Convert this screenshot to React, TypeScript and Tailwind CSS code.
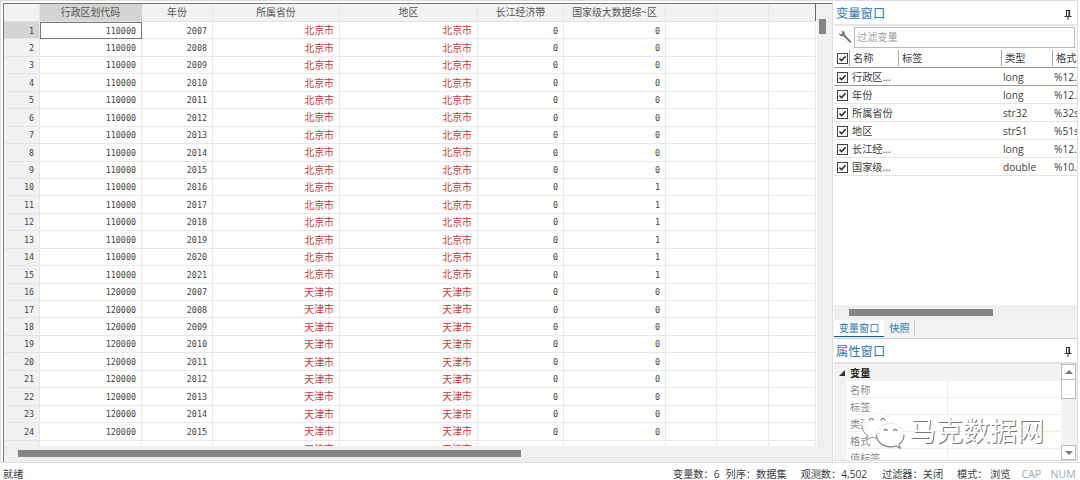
import React from 'react';

interface Column {
  name: string;
  width: string;
  active?: boolean;
}

interface Variable {
  name: string;
  type: string;
  format: string;
}

const columns: Column[] = [
  { name: '行政区划代码', width: 'w-[102px]', active: true },
  { name: '年份', width: 'w-[71px]' },
  { name: '所属省份', width: 'w-[127px]' },
  { name: '地区', width: 'w-[138px]' },
  { name: '长江经济带', width: 'w-[86px]' },
  { name: '国家级大数据综~区', width: 'w-[102px]' },
  { name: '', width: 'w-[51px]' },
  { name: '', width: 'w-[52px]' },
  { name: '', width: 'w-[47px]' },
];

// 15 years for Beijing first, then Tianjin
const rows = Array.from({ length: 24 }, (_, i) => {
  const year = 2007 + (i % 15);
  const beijing = i < 15;
  const city = beijing ? '北京市' : '天津市';
  return [
    beijing ? '110000' : '120000',
    String(year),
    city,
    city,
    '0',
    year >= 2016 ? '1' : '0',
    '',
    '',
    '',
  ];
});

// only the tops of the city names show in the last row
rows.push(['', '', '天津市', '天津市', '', '', '', '', '']);

const variables: Variable[] = [
  { name: '行政区...', type: 'long', format: '%12.' },
  { name: '年份', type: 'long', format: '%12.' },
  { name: '所属省份', type: 'str32', format: '%32s' },
  { name: '地区', type: 'str51', format: '%51s' },
  { name: '长江经...', type: 'long', format: '%12.' },
  { name: '国家级...', type: 'double', format: '%10.' },
];

const properties = ['名称', '标签', '类型', '格式', '值标签'];

const Checkbox: React.FC = () => (
  <svg viewBox="0 0 11 11" className="mt-px h-[11px] w-[11px] flex-shrink-0">
    <rect x="0.5" y="0.5" width="10" height="10" fill="#fff" stroke="#444" />
    <path d="M2.5 5.5 L4.5 7.7 L8.6 3.2" fill="none" stroke="#222" strokeWidth="1.5" />
  </svg>
);

const Pin: React.FC = () => (
  <svg viewBox="0 0 8 12" className="mr-[5px] h-3 w-2">
    <path d="M2 1.5 H6 M2.5 1 V7 M0.5 7.5 H7.5 M4 8 V11" fill="none" stroke="#333" />
    <path d="M5.25 1 V7" stroke="#333" strokeWidth="1.7" />
  </svg>
);

const Wrench: React.FC = () => (
  <svg viewBox="0 0 14 14" className="h-3.5 w-3.5">
    <path
      d="M1 3.2 L3.1 4.2 L4.3 3.2 L3.6 1.1 C5.8 0.9 7.2 2.5 6.7 4.5 L13 11.2 C13.5 12.2 12.6 13.1 11.6 12.5 L5.2 6 C3.1 6.6 1 5.4 1 3.2 Z"
      fill="#747474"
    />
  </svg>
);

const DataGrid: React.FC = () => (
  <div className="flex h-[459px] w-[829px] flex-col border-l border-t border-[#777] bg-[#efefef]">
    <div className="flex h-[442px]">
      <div className="flex w-[813px] flex-col overflow-hidden bg-white">
        <div className="flex h-[18px] flex-shrink-0 border-b border-[#e2e2e2] bg-[#f2f2f2]">
          <div className="w-9 flex-shrink-0 border-r border-[#e6e6e6]" />
          {columns.map((column, i) => (
            <div
              key={i}
              className={`flex flex-shrink-0 items-center justify-center whitespace-nowrap border-r pt-px text-[9.9px] leading-none text-[#555] last:border-[#666] ${column.width} ${column.active ? 'border-[#d4d4d4] bg-[#d4d4d4]' : 'border-[#e6e6e6]'}`}
            >
              {column.name}
            </div>
          ))}
        </div>
        {rows.map((row, i) => (
          <div key={i} className="flex h-[17.45px] flex-shrink-0 font-['DejaVu_Sans_Mono','Noto_Sans_CJK_SC',monospace] text-[8.4px] leading-none text-[#444]">
            <div
              className={`flex w-9 flex-shrink-0 items-center justify-end border-b border-r border-[#e6e6e6] pr-[5px] pt-px ${i === 0 ? 'bg-[#d4d4d4]' : 'bg-[#f2f2f2]'}`}
            >
              {i < 24 && i + 1}
            </div>
            {row.map((value, j) => (
              <div
                key={j}
                className={`flex flex-shrink-0 items-center justify-end pr-[5px] ${columns[j].width} ${j === 2 || j === 3 ? "pt-0.5 font-['Noto_Sans_CJK_SC',sans-serif] text-[9.9px] text-[#bd3c3c]" : 'pt-px'} ${i === 0 && j === 0 ? 'border border-[#777]' : 'border-b border-r border-[#e9e9e9]'}`}
              >
                {value}
              </div>
            ))}
          </div>
        ))}
      </div>
      <div className="flex flex-1 pl-0.5 pt-[15px]">
        <div className="h-[15px] w-[7px] bg-[#858585]" />
      </div>
    </div>
    <div className="flex flex-1 pl-[14px] pt-1">
      <div className="h-[7px] w-[503px] bg-[#858585]" />
    </div>
  </div>
);

const VariablesPanel: React.FC = () => (
  <div className="flex h-[336px] flex-col">
    <div className="flex h-[23px] flex-shrink-0 items-center justify-between border-b-2 border-[#e6e6e6] pl-0.5 pt-0.5 text-[12.3px] text-[#2f78a8]">
      变量窗口
      <Pin />
    </div>
    <div className="flex h-[22px] flex-shrink-0 items-center justify-between pl-1 pr-0.5">
      <Wrench />
      <div className="flex h-[21px] w-[221px] items-center border border-[#bdbdbd] pl-0.5 pt-px text-[10.2px] text-[#a0a0a0]">
        过滤变量
      </div>
    </div>
    <div className="flex h-5 flex-shrink-0 items-center overflow-hidden whitespace-nowrap border-b border-[#999] pl-[3px]">
      <Checkbox />
      <div className="ml-px flex h-4 w-[49px] flex-shrink-0 items-center border-l border-[#aaa] pl-[3px] pt-px">名称</div>
      <div className="flex h-4 w-[103px] flex-shrink-0 items-center border-l border-[#aaa] pl-[3px] pt-px">标签</div>
      <div className="flex h-4 w-[51px] flex-shrink-0 items-center border-l border-[#aaa] pl-[3px] pt-px">类型</div>
      <div className="flex h-4 flex-shrink-0 items-center border-l border-[#aaa] pl-[3px] pt-px">格式</div>
    </div>
    {variables.map((variable, i) => (
      <div
        key={variable.name}
        className={`flex h-[18px] flex-shrink-0 items-center overflow-hidden whitespace-nowrap border-b pl-[3px] pt-px ${i === 0 ? 'border-[#999]' : 'border-[#e5e5e5]'}`}
      >
        <Checkbox />
        <div className="ml-1 w-[151px] flex-shrink-0">{variable.name}</div>
        <div className="w-[51px] flex-shrink-0">{variable.type}</div>
        <div className="flex-shrink-0">{variable.format}</div>
      </div>
    ))}
    <div className="flex-1" />
    <div className="flex h-[15px] flex-shrink-0 items-center bg-[#efefef] pl-[15px]">
      <div className="h-[7px] w-36 bg-[#858585]" />
    </div>
    <div className="flex h-[19px] flex-shrink-0 items-start border-b border-[#d0d0d0] bg-[#f3f3f3] text-[#2f78a8]">
      <div className="flex h-[17px] w-[50px] items-center justify-center border-b border-[#145b91] bg-white">变量窗口</div>
      <div className="flex h-4 w-[31px] items-center justify-center border-r border-[#ccc] pl-px pt-px">快照</div>
    </div>
  </div>
);

// WeChat mark and account name laid over the properties list
const Watermark: React.FC = () => (
  <div className="absolute left-[27px] top-[73px] flex items-start">
    <svg viewBox="0 0 46 38" className="h-[38px] w-[46px]">
      <path d="M16.5 1 C7.5 1 1 6.5 1 13.5 C1 18 3.2 21.3 6.8 23.6 L5.3 28 L11 25.2 C13 25.8 15 26 17 26 C26 26 32 20 32 13.5 C32 6.5 25.5 1 16.5 1 Z" fill="#fff" fillOpacity="0.88" stroke="#e4e4e4" strokeWidth="0.5" />
      <path d="M1 13.5 C1 18 3.2 21.3 6.8 23.6 L5.3 28 L11 25.2 C13 25.8 14 26 16 26" fill="none" stroke="#888" strokeWidth="0.9" />
      <path d="M29.5 11.5 C21.5 11.5 15.5 16.5 15.5 23 C15.5 30 22 34.8 29.5 34.8 C31.5 34.8 33.4 34.5 34.8 34 L39 36.2 L38 32.5 C41 30.2 43 27 43 23 C43 16.5 37 11.5 29.5 11.5 Z" fill="#fff" stroke="#ccc" strokeWidth="0.5" />
      <path d="M15.5 23 C15.5 30 22 34.8 29.5 34.8 C31.5 34.8 33.4 34.5 34.8 34 L39 36.2 L38 32.5 C41 30.2 43 27 43 23" fill="none" stroke="#858585" strokeWidth="1.2" />
      <path d="M8.3 8.5 A2 2 0 0 1 12.3 8.5 M20 8.5 A2 2 0 0 1 24 8.5 M23.2 19 A1.6 1.6 0 0 1 26.4 19 M32.5 19 A1.6 1.6 0 0 1 35.7 19" fill="none" stroke="#777" strokeWidth="1.1" />
    </svg>
    <span className="ml-0.5 mt-[5px] whitespace-nowrap text-[27px] leading-none text-white [text-shadow:1px_1px_0.5px_#777]">
      马克数据网
    </span>
  </div>
);

const PropertiesPanel: React.FC = () => (
  <div className="relative flex h-[122px] flex-col border-b border-[#ddd]">
    <div className="flex h-[25px] flex-shrink-0 items-center justify-between border-b-2 border-[#e2e2e2] pl-0.5 pt-[3px] text-[12.3px] text-[#2f78a8]">
      属性窗口
      <Pin />
    </div>
    <div className="flex h-24 overflow-hidden bg-[#f2f2f2]">
      <div className="flex w-[227px] flex-col">
        <div className="flex h-[17px] flex-shrink-0 items-center pt-px font-bold text-[#222]">
          <svg viewBox="0 0 6 6" className="ml-[5px] mr-[5px] h-1.5 w-1.5">
            <path d="M6 0 V6 H0 Z" fill="#333" />
          </svg>
          变量
        </div>
        {properties.map((property) => (
          <div key={property} className="ml-[13px] flex h-[17px] flex-shrink-0 border-b border-[#eee] bg-white text-[#8a8a8a]">
            <div className="flex w-[101px] items-center border-r border-[#eee] pl-[3px] pt-0.5">{property}</div>
          </div>
        ))}
      </div>
      <div className="flex w-[15px] flex-col justify-between">
        <div>
          <div className="flex h-4 items-center justify-center border border-[#bbb] bg-white">
            <svg viewBox="0 0 8 4" className="h-1 w-2"><path d="M4 0 L8 4 H0 Z" fill="#777" /></svg>
          </div>
          <div className="h-[19px] border border-t-0 border-[#bbb] bg-white" />
        </div>
        <div className="flex h-[15px] items-center justify-center border border-[#bbb] bg-white">
          <svg viewBox="0 0 8 4" className="h-1 w-2"><path d="M0 0 H8 L4 4 Z" fill="#777" /></svg>
        </div>
      </div>
    </div>
    <Watermark />
  </div>
);

const StatusBar: React.FC = () => (
  <div className="flex h-[17px] items-center whitespace-nowrap pl-[3px] pr-1 pt-[5px]">
    <span className="w-[670px]">就绪</span>
    <span className="w-[52.5px]">变量数：6</span>
    <span className="w-[75px]">列序：数据集</span>
    <span className="w-[81.5px]">观测数：4,502</span>
    <span className="w-[75px]">过滤器：关闭</span>
    <span className="w-[33px]">模式：</span>
    <span className="w-[31.5px]">浏览</span>
    <span className="w-[29px] text-[10.6px] text-[#9aabbc]">CAP</span>
    <span className="text-[10.6px] text-[#9aabbc]">NUM</span>
  </div>
);

const App: React.FC = () => {
  return (
    <div className="h-[480px] w-[1080px] overflow-hidden bg-white font-['Open_Sans','Noto_Sans_CJK_SC',sans-serif] text-[10.2px] leading-none text-[#3d3d3d]">
      <div className="flex h-[463px] border-b border-[#ddd]">
        <div className="w-[833px] flex-shrink-0 border-x border-t border-[#ddd] pl-0.5 pt-0.5">
          <DataGrid />
        </div>
        <div className="ml-px w-[244px] overflow-hidden border-r border-t border-[#ddd] pt-0.5">
          <VariablesPanel />
          <PropertiesPanel />
        </div>
      </div>
      <StatusBar />
    </div>
  );
};

export default App;
